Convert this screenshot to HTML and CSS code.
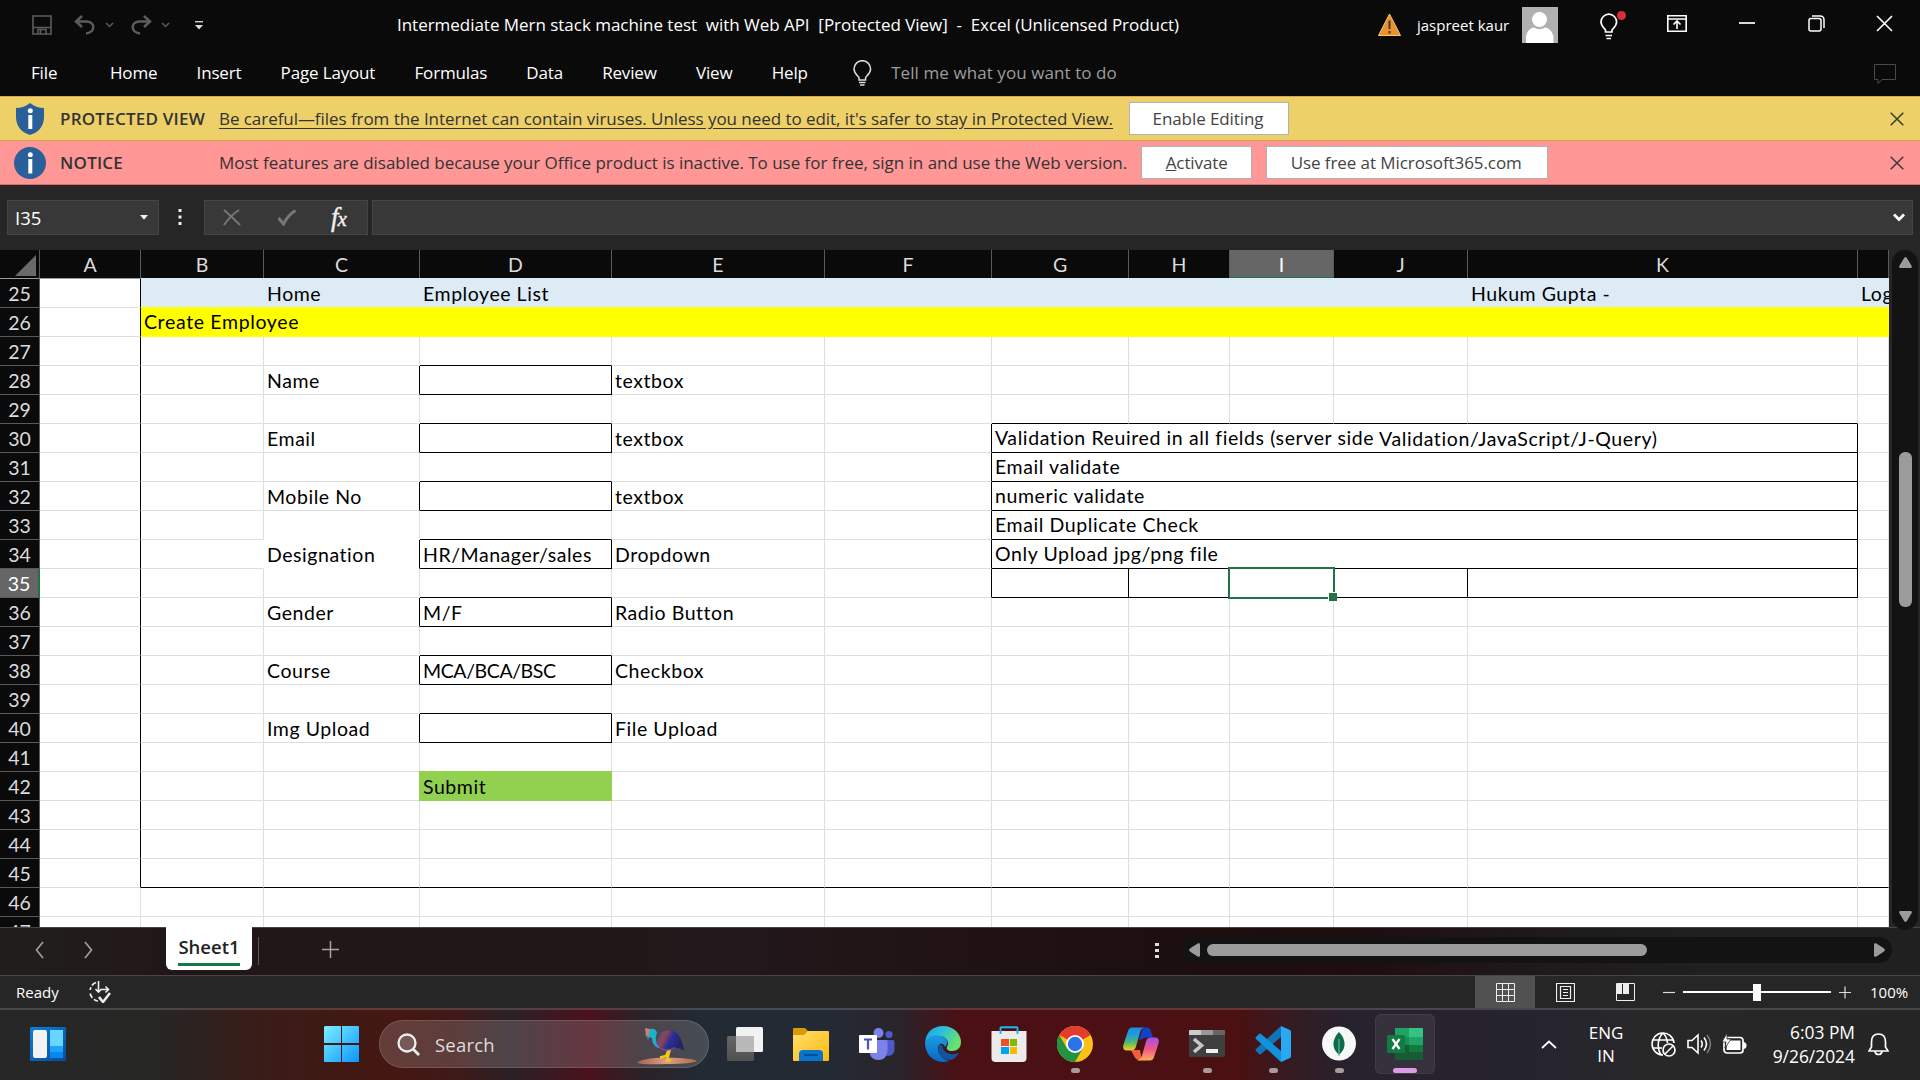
FILE: index.html
```html
<!DOCTYPE html>
<html lang="en">
<head>
<meta charset="utf-8">
<title>Intermediate Mern stack machine test with Web API - Excel</title>
<link rel="stylesheet" href="styles.css">
</head>
<body>
<div class="app">
  <header class="titlebar">
    <div class="quick">
      <svg class="q-save" width="20" height="20" viewBox="0 0 20 20"><path d="M1 1h18v18H1zM1 12.500h18M6 19v-4.500h8V19M8.500 15v4" fill="none" stroke="#5c5c5c" stroke-width="1.600"/></svg>
      <svg class="q-undo" width="22" height="20" viewBox="0 0 22 20"><path d="M8 1L2 6.500l6 5.500M2 6.500h11c9 1 8 11-1 12" fill="none" stroke="#5c5c5c" stroke-width="2.500"/></svg>
      <svg class="q-chev" width="9" height="6" viewBox="0 0 9 6"><path d="M1 1l3.500 3.500L8 1" fill="none" stroke="#5c5c5c" stroke-width="1.500"/></svg>
      <svg class="q-redo" width="22" height="20" viewBox="0 0 22 20"><path d="M14 1l6 5.500-6 5.500M20 6.500H9c-9 1-8 11 1 12" fill="none" stroke="#5c5c5c" stroke-width="2.500"/></svg>
      <svg class="q-chev" width="9" height="6" viewBox="0 0 9 6"><path d="M1 1l3.500 3.500L8 1" fill="none" stroke="#5c5c5c" stroke-width="1.500"/></svg>
      <svg class="q-more" width="8" height="9" viewBox="0 0 8 9"><path d="M0 .7h8" stroke="#ddd" stroke-width="1.300"/><path d="M0 4h8L4 8.500z" fill="#ddd"/></svg>
    </div>
    <div class="doc-title"><span class="t">Intermediate Mern stack machine test&nbsp; with Web API&nbsp; [Protected View]&nbsp; -&nbsp; Excel (Unlicensed Product)</span></div>
    <div class="account">
      <svg width="23" height="23" viewBox="0 0 23 23"><path d="M11.500 1L22.500 22.500H.5z" fill="#e8912d" stroke="#f6c983"/><path d="M11.500 7.500v8.500M11.500 18v2.500" stroke="#443a30" stroke-width="2"/></svg>
      <span class="user t">jaspreet kaur</span>
      <svg width="36" height="36" viewBox="0 0 36 36"><path fill="#b0b0b0" d="M0 0h36v36H0z"/><circle cx="17.500" cy="12.500" r="7.500" fill="#fff"/><path d="M4 36V29q2-8 8-8.500q5.500 3.500 11 0q6 .5 8.500 8.500v7z" fill="#fff"/></svg>
    </div>
    <div class="window-buttons">
      <svg width="28" height="30" viewBox="0 0 28 30"><path d="M6.500 21v-2C4.500 16.500 2 14.500 2 11a7.800 7.800 0 0 1 15.600 0c0 3.500-2.600 5.500-4.600 8v2zM6.500 24.500h6.500M7.500 27.500h4.500" fill="none" stroke="#fff" stroke-width="1.700"/><circle cx="22.500" cy="4.500" r="4.500" fill="#d92f34"/></svg>
      <svg width="20" height="17" viewBox="0 0 20 17"><path d="M.8.8h18.400v15.400H.8zM1 4h18M10 14V6.500M6.500 9.500L10 6l3.500 3.500" fill="none" stroke="#fff" stroke-width="1.600"/></svg>
      <svg width="16" height="17" viewBox="0 0 16 17"><path d="M0 8h16" stroke="#fff" stroke-width="1.700"/></svg>
      <svg width="17" height="17" viewBox="0 0 17 17"><rect x="1" y="3.500" width="12" height="12.500" rx="2" fill="none" stroke="#fff" stroke-width="1.500"/><path d="M4 1h8q4 0 4 4v8" fill="none" stroke="#fff" stroke-width="1.500"/></svg>
      <svg width="17" height="17" viewBox="0 0 17 17"><path d="M1 1l15 15M16 1L1 16" stroke="#fff" stroke-width="1.600"/></svg>
    </div>
  </header>

  <nav class="tabs">
    <span class="t file">File</span><span class="t">Home</span><span class="t">Insert</span><span class="t">Page Layout</span><span class="t">Formulas</span><span class="t">Data</span><span class="t">Review</span><span class="t">View</span><span class="t">Help</span>
    <svg class="bulb" width="19" height="26" viewBox="0 0 19 26"><path d="M6 20v-2.500C4 15 1 13 1 9a8.300 8.300 0 0 1 16.600 0c0 4-3 6-5 8.500V20zM6 22.500h6.500M7 25h4.500" fill="none" stroke="#ddd" stroke-width="1.500"/></svg>
    <span class="t tell">Tell me what you want to do</span>
    <svg class="comment" width="22" height="20" viewBox="0 0 22 20"><path d="M.5.5h21v15H8l-4 4v-4H.5z" fill="none" stroke="#4a4a4a"/></svg>
  </nav>

  <section class="bar protected">
    <svg class="bar-icon" width="32" height="32" viewBox="0 0 32 32"><path d="M16 0q6 5 14 5v10q-1 13-14 17Q3 28 2 15V5q8 0 14-5z" fill="#2a6099"/><circle cx="16.300" cy="7.800" r="2.500" fill="#fff"/><path d="M16.300 12v14" stroke="#fff" stroke-width="4"/></svg>
    <strong class="label t">PROTECTED VIEW</strong>
    <span class="msg link t">Be careful—files from the Internet can contain viruses. Unless you need to edit, it's safer to stay in Protected View.</span>
    <span class="btn b1"><span class="t">Enable Editing</span></span>
    <svg class="bar-close" width="14" height="14" viewBox="0 0 14 14"><path d="M.7.700l12.600 12.600M13.300.700L.7 13.300" stroke="#3a3a3a" stroke-width="1.500"/></svg>
  </section>
  <section class="bar notice">
    <svg class="bar-icon" width="32" height="32" viewBox="0 0 32 32"><circle cx="16" cy="16" r="16" fill="#2a6099"/><circle cx="16.300" cy="7.800" r="2.500" fill="#fff"/><path d="M16.300 12v14.500" stroke="#fff" stroke-width="4"/></svg>
    <strong class="label t">NOTICE</strong>
    <span class="msg t">Most features are disabled because your Office product is inactive. To use for free, sign in and use the Web version.</span>
    <span class="btn b2"><span class="t"><u>A</u>ctivate</span></span>
    <span class="btn b3"><span class="t">Use free at Microsoft365.com</span></span>
    <svg class="bar-close" width="14" height="14" viewBox="0 0 14 14"><path d="M.7.700l12.600 12.600M13.300.700L.7 13.300" stroke="#3a3a3a" stroke-width="1.500"/></svg>
  </section>

  <section class="formula">
    <div class="field name"><span class="t">I35</span><svg width="8" height="5" viewBox="0 0 8 5"><path d="M0 0h8L4 4.800z" fill="#eee"/></svg></div>
    <svg class="dots" width="4" height="16" viewBox="0 0 4 16"><path d="M.5 0h3v3h-3zM.5 6.500h3v3h-3zM.5 13h3v3h-3z" fill="#eee"/></svg>
    <div class="field fx">
      <svg width="18" height="17" viewBox="0 0 18 17"><path d="M1 1q7 6 16 15M16 1Q8 6 1 16" fill="none" stroke="#777" stroke-width="2"/></svg>
      <svg width="20" height="17" viewBox="0 0 20 17"><path d="M1.500 9l5 6Q11 6 18.500 1.500" fill="none" stroke="#777" stroke-width="3"/></svg>
      <span class="fx-label">f<small>x</small></span>
    </div>
    <div class="field input"><svg width="12" height="9" viewBox="0 0 12 9"><path d="M1 1.500l5 5 5-5" fill="none" stroke="#fff" stroke-width="2.800"/></svg></div>
  </section>

  <main class="work">
    <div class="sheet" id="sheet"></div>
    <div class="vscroll">
      <svg width="13" height="11" viewBox="0 0 13 11"><path d="M6.500 0q1 0 2 2l4.200 7q.5 2-1 2H1.300q-1.500 0-1-2l4.200-7q1-2 2-2z" fill="#9b9b9b"/></svg>
      <div class="vthumb"></div>
      <svg width="13" height="11" viewBox="0 0 13 11"><path d="M6.500 11q1 0 2-2l4.200-7q.5-2-1-2H1.300q-1.500 0-1 2l4.200 7q1 2 2 2z" fill="#9b9b9b"/></svg>
    </div>
  </main>

  <footer class="sheetbar">
    <svg class="prev" width="9" height="18" viewBox="0 0 9 18"><path d="M8 1L1.500 9 8 17" fill="none" stroke="#a09c9c" stroke-width="1.700"/></svg>
    <svg class="next" width="9" height="18" viewBox="0 0 9 18"><path d="M1 1l6.500 8L1 17" fill="none" stroke="#a09c9c" stroke-width="1.700"/></svg>
    <div class="tab"><span class="t">Sheet1</span></div>
    <i class="tab-sep"></i>
    <svg class="add" width="17" height="17" viewBox="0 0 17 17"><path d="M0 8.500h17M8.500 0v17" stroke="#a8a4a4" stroke-width="1.500"/></svg>
    <svg class="grip" width="4" height="16" viewBox="0 0 4 16"><path d="M0 0h4v3H0zM0 6h4v3H0zM0 12h4v3H0z" fill="#ddd"/></svg>
    <div class="hscroll">
      <svg width="11" height="14" viewBox="0 0 11 14"><path d="M0 7q0-1 2-2.200L9 .3q2-.6 2 1v11.400q0 1.600-2 1L2 9.200Q0 8 0 7z" fill="#9b9b9b"/></svg>
      <div class="hthumb"></div>
      <svg width="11" height="14" viewBox="0 0 11 14"><path d="M11 7q0-1-2-2.200L2 .3q-2-.6-2 1v11.400q0 1.600 2 1l7-4.500Q11 8 11 7z" fill="#9b9b9b"/></svg>
    </div>
  </footer>

  <footer class="status">
    <span class="t ready">Ready</span>
    <svg class="access" width="22" height="22" viewBox="0 0 22 22"><path d="M7 1.500A9 9 0 0 0 1.200 9M1.200 12.500A9 9 0 0 0 9 20" fill="none" stroke="#eee" stroke-width="1.700" stroke-dasharray="5 2"/><path d="M9.500 0v11M6.500 8l3 3 3-3M12 8.500h7M16.500 5.500l3 3-3 3" fill="none" stroke="#eee" stroke-width="1.600"/><path d="M10 16l4 5 7-9" fill="none" stroke="#eee" stroke-width="2.600"/></svg>
    <div class="views">
      <span class="view on"><svg width="19" height="19" viewBox="0 0 19 19"><path d="M.5.5h18v18H.5zM6.500 0v19M12.500 0v19M0 6.500h19M0 12.500h19" fill="none" stroke="#eee"/></svg></span>
      <span class="view"><svg width="19" height="19" viewBox="0 0 19 19"><path d="M.5.500h18v18H.5zM4.500 3.500h10v12h-10zM7 6.500h5M7 9.500h5M7 12.500h5" fill="none" stroke="#eee" stroke-width="1.200"/></svg></span>
      <span class="view"><svg width="19" height="19" viewBox="0 0 19 19"><path d="M.5.500h18v17H.5z" fill="none" stroke="#eee"/><path d="M1 1h5v10H1zM7 1h6v10H7z" fill="#eee"/></svg></span>
    </div>
    <div class="zoom">
      <svg width="12" height="13" viewBox="0 0 12 13"><path d="M0 6.500h12" stroke="#ddd" stroke-width="1.200"/></svg>
      <div class="track"><i></i></div>
      <svg width="12" height="13" viewBox="0 0 12 13"><path d="M0 6.500h12M6 .5v12" stroke="#ddd" stroke-width="1.200"/></svg>
      <span class="t">100%</span>
    </div>
  </footer>

  <div class="taskbar">
    <svg class="widgets" width="36" height="34" viewBox="0 0 36 34"><defs>
      <linearGradient id="wd" x2="1" y2="1"><stop stop-color="#0d7fdc"/><stop offset="1" stop-color="#0a4a94"/></linearGradient>
      <linearGradient id="win" x2="1" y2="1"><stop stop-color="#7df0ff"/><stop offset="1" stop-color="#0a95ff"/></linearGradient></defs>
      <rect width="36" height="34" rx="1.500" fill="url(#wd)"/><rect x="3" y="3" width="14" height="28" rx="2" fill="#f3f3f3"/><path d="M20 3h13v16H20z" fill="#68d7ff"/><path d="M20 19h13v6H20z" fill="#1ba4fb"/><path d="M20 25h13v6H20z" fill="#0788ee"/></svg>
    <svg class="start" width="36" height="36" viewBox="0 0 36 36"><path d="M1 0h16v17H0V1zM18 0h16q1 0 1 1v16H18zM0 19h17v17H1q-1 0-1-1zM18 19h17v16q0 1-1 1H18z" fill="url(#win)"/></svg>
    <div class="search">
      <svg width="23" height="23" viewBox="0 0 23 23"><circle cx="10" cy="10" r="8.500" fill="#8a7676" fill-opacity=".5" stroke="#eee" stroke-width="2.300"/><path d="M16 16l6 6" stroke="#eee" stroke-width="2.800"/></svg>
      <span class="t">Search</span>
      <svg class="bird" width="62" height="42" viewBox="0 0 62 42"><defs><linearGradient id="bd" x2="1" y2=".4"><stop stop-color="#1a5fae"/><stop offset=".35" stop-color="#8f4350"/><stop offset=".6" stop-color="#262e9a"/><stop offset="1" stop-color="#1f2560"/></linearGradient><linearGradient id="sd" x2="1"><stop stop-color="#a8604e"/><stop offset=".5" stop-color="#e0a080"/><stop offset="1" stop-color="#a86a48"/></linearGradient></defs>
        <path d="M0 40q4-5 30-5.500 26 .5 30 3.500-4 3-30 3-24 1-30-1z" fill="url(#sd)"/><path d="M32 26l-3 7-6 1.500M33 26l-3 11.500h4" fill="none" stroke="#f2c81e" stroke-width="2.400"/>
        <path d="M13 6q6-1 7 4-2 4-1 8 1 4 4 6l-2 1q-6-3-6-10l-3-1 -1 3q-2-4 2-11z" fill="#1fb0cc"/><path d="M8 5l5 1-1 6-3 2z" fill="#b98a72"/>
        <path d="M20 18q3-10 8-10 10-3 14 5 4 6 5 15-5-4-9-3-4 3-9 2-6-1-9-9z" fill="url(#bd)"/><path d="M19 18q3 9 10 9 5 0 9-2.500" fill="none" stroke="#8a42a4" stroke-width="1.300"/></svg>
    </div>
    <div class="pinned">
      <span class="app-icon"><svg width="36" height="36" viewBox="0 0 36 36"><defs><linearGradient id="tv" y2="1" x2="0"><stop stop-color="#666"/><stop offset="1" stop-color="#505050"/></linearGradient></defs><rect x="9" y="1" width="27" height="25" rx="1.500" fill="#f2f2f2"/><rect y="10" width="27" height="25" rx="1.500" fill="url(#tv)"/><path d="M9 10h18v16H9z" fill="#b9b9b9"/></svg></span>
      <span class="app-icon"><svg width="36" height="36" viewBox="0 0 36 36"><defs><linearGradient id="fo" x2="1" y2="1"><stop stop-color="#ffdf6b"/><stop offset="1" stop-color="#fdb911"/></linearGradient></defs><path d="M0 3q0-1 1-1h11l4 4-4 3H0z" fill="#d99a05"/><path d="M0 9h11l4-4h20q1 0 1 1v28q0 1-1 1H1q-1 0-1-1z" fill="url(#fo)"/><path d="M6 35V28q0-4 4-4h16q4 0 4 4v7z" fill="#0a74cc"/><path d="M11 29h14" stroke="#064f92" stroke-width="2"/></svg></span>
      <span class="app-icon"><svg width="36" height="36" viewBox="0 0 36 36"><circle cx="19.500" cy="7" r="5" fill="#7b83eb"/><circle cx="30" cy="8.500" r="3.600" fill="#5059c9"/><path d="M26 14h8q1.500 0 1.500 1.500V23q0 6-6 7-3 0-5-2z" fill="#5059c9"/><path d="M12 14h15q1.500 0 1.500 1.500V25q-1 9-9 9t-9-8z" fill="#7b83eb"/><rect y="9" width="18" height="18" rx="1" fill="#fff"/><path d="M5 13.500h8M9 13.500v10" stroke="#4b53bc" stroke-width="2.200"/></svg></span>
      <span class="app-icon"><svg width="36" height="36" viewBox="0 0 36 36"><defs><linearGradient id="e1" x2="1" y2=".4"><stop stop-color="#1aa0e8"/><stop offset=".5" stop-color="#2fc0d8"/><stop offset="1" stop-color="#66e36a"/></linearGradient><linearGradient id="e2" x2="0" y2="1"><stop stop-color="#1b9de2"/><stop offset="1" stop-color="#0a68c4"/></linearGradient></defs><path d="M0 17C1 5 9 0 18 0c11 0 18 8 18 16 0 6-4 9-9 9-4 0-6-2-5-4 3-5-1-11-8-11C7 10 2 13 0 17z" fill="url(#e1)"/><path d="M0 17c3-9 16-10 21-4 2 3 1 6-1 8-1-3-3-4-5-3-5 4-1 14 9 17C10 39 0 29 0 17z" fill="url(#e2)"/><path d="M14 19c-3 8 3 15 12 15 4-1 6-4 8-7-9 3-16 0-17-8z" fill="#1254a0"/></svg></span>
      <span class="app-icon"><svg width="36" height="36" viewBox="0 0 36 36"><path d="M.5 5h35v27q0 4-4 4h-27q-4 0-4-4z" fill="#ececec"/><path d="M9.500 8V2q0-.8.8-.8h15.400q.8 0 .8.800v6" fill="none" stroke="#22b3ee" stroke-width="1.900"/><path d="M10 13h8v7h-8z" fill="#f25022"/><path d="M19 13h7v7h-7z" fill="#7fba00"/><path d="M10 21h8v7h-8z" fill="#00a4ef"/><path d="M19 21h7v7h-7z" fill="#ffb900"/></svg></span>
      <span class="app-icon run"><svg width="36" height="36" viewBox="0 0 36 36"><circle cx="18" cy="18" r="18" fill="#fbc116"/><path d="M18 18L2.400 9a18 18 0 0 1 31.200 0z" fill="#e33b2e"/><path d="M2.400 9a18 18 0 0 0 15.600 27l7.800-13.500L10 22.500z" fill="#229342"/><circle cx="18" cy="18" r="9" fill="#fff"/><circle cx="18" cy="18" r="7.200" fill="#2b73e8"/></svg></span>
      <span class="app-icon"><svg width="36" height="36" viewBox="0 0 36 36"><defs><linearGradient id="c1" x2="0" y2="1"><stop stop-color="#1b8ce8"/><stop offset=".35" stop-color="#1fa0d8"/><stop offset=".65" stop-color="#55b86a"/><stop offset="1" stop-color="#f5d020"/></linearGradient><linearGradient id="c2" x2="0" y2="1"><stop stop-color="#a050f0"/><stop offset=".5" stop-color="#f0568a"/><stop offset="1" stop-color="#fdae58"/></linearGradient></defs><path d="M20 1.500h4q3 0 4 4l2 6h-8l-6 3z" fill="#1740c8"/><path d="M8 24h9l2 10q-6 1-8-4z" fill="#f2603a"/><path d="M9 1.500h12q-3 1-4 5l-4 14q-1 4-5 4H4q-5 0-3.500-6L5 5q1-3.500 4-3.500z" fill="url(#c1)"/><path d="M27 34.500H14q4-1 5-5l4-14q1-4 5-4h4q5 0 3.500 6L31 31q-1 3.500-4 3.500z" fill="url(#c2)"/></svg></span>
      <span class="app-icon run"><svg width="36" height="36" viewBox="0 0 36 36"><rect y="4" width="36" height="27" rx="1.500" fill="#3f3f3f"/><path d="M0 9V5q0-1 1-1h11v5z" fill="#ccc"/><path d="M12 4h12v5H12z" fill="#999"/><path d="M24 4h11q1 0 1 1v4H24z" fill="#666"/><path d="M5 13l7.500 6.500L5 26" fill="none" stroke="#c8c8c8" stroke-width="3.600"/><path d="M17 23h12v4H17z" fill="#f0f0f0"/></svg></span>
      <span class="app-icon run"><svg width="36" height="36" viewBox="0 0 36 36"><path d="M1 25l3 3q1 1 2 0L26 11V0L1 23q-1 1 0 2z" fill="#0f74b8"/><path d="M1 11l3-3q1-1 2 0l20 17v11L1 13q-1-1 0-2z" fill="#1390dc"/><path d="M26 0l9 4q1 .5 1 2v24q0 1.500-1 2l-9 4z" fill="#2aa8f2"/></svg></span>
      <span class="app-icon run"><svg width="36" height="36" viewBox="0 0 36 36"><circle cx="18" cy="17.500" r="17" fill="#f7f7f7"/><path d="M18 6q6 6 5.500 13Q23 25 18 28.500 13 25 12.500 19 12 12 18 6z" fill="#0c6b4c"/><path d="M18 13v17" stroke="#6fae94" stroke-width="1.200"/></svg></span>
      <span class="app-icon active"><svg width="36" height="36" viewBox="0 0 36 36"><path d="M8 2h14v9H8z" fill="#21a366"/><path d="M22 2h13q1 0 1 1v8H22z" fill="#33c481"/><path d="M8 11h14v8H8z" fill="#1a8f55"/><path d="M22 11h14v8H22z" fill="#21a366"/><path d="M8 19h28v14q0 1-1 1H9q-1 0-1-1z" fill="#185c37"/><path d="M22 19h14v7H22z" fill="#107c41"/><rect y="9" width="18" height="18" rx="1.500" fill="#107c41"/><path d="M5.500 13l7 10M12.500 13l-7 10" stroke="#fff" stroke-width="2.300"/></svg></span>
    </div>
    <div class="tray">
      <svg class="up" width="16" height="9" viewBox="0 0 16 9"><path d="M1 8l7-6.500L15 8" fill="none" stroke="#fff" stroke-width="1.800"/></svg>
      <div class="lang"><span class="t">ENG</span><span class="t">IN</span></div>
      <svg class="globe" width="25" height="25" viewBox="0 0 25 25"><path d="M12 23A11 11 0 1 1 23 11M12 1C6 7 6 17 10 23M12 1q4 4 4.500 10M2 8h20M2 16h9" fill="none" stroke="#fff" stroke-width="1.600"/><circle cx="18" cy="18" r="6" fill="none" stroke="#fff" stroke-width="1.700"/><path d="M14 22l8-8" stroke="#fff" stroke-width="1.600"/></svg>
      <svg class="spk" width="25" height="22" viewBox="0 0 25 22"><path d="M1 7.500h4L11 2v18l-6-5.500H1z" fill="none" stroke="#fff" stroke-width="1.600"/><path d="M14 7.500q2.500 3.500 0 7M17 4.500q5 6.500 0 13" fill="none" stroke="#fff" stroke-width="1.600"/><path d="M20 2q7 9 0 18" fill="none" stroke="#777" stroke-width="1.600"/></svg>
      <svg class="bat" width="25" height="22" viewBox="0 0 25 22"><rect x="2" y="4.500" width="19" height="15.500" rx="3" fill="none" stroke="#fff" stroke-width="1.700"/><path d="M5 7.500h13.500V17H4.500z" fill="#fff"/><path d="M21 9q3.500 0 3.500 3.500T21 16z" fill="#fff"/><path d="M5 0L0 9h4l-1 6 6-9H5z" fill="#fff" stroke="#26262a" stroke-width=".8"/></svg>
      <div class="clock"><span class="t">6:03 PM</span><span class="t">9/26/2024</span></div>
      <svg class="bell" width="21" height="23" viewBox="0 0 21 23"><path d="M10.500 1q-7 0-7 8v5L1 18h19l-2.500-4V9q0-8-7-8zM7 18.500q.5 3 3.500 3t3.500-3" fill="none" stroke="#fff" stroke-width="1.700"/></svg>
    </div>
  </div>
</div>
<script src="script.js"></script>
</body>
</html>
```
FILE: styles.css
```css
* { box-sizing: border-box; }
body { margin: 0; background: #0a0a0a; font-family: "Open Sans", "Noto Sans", sans-serif; color: #fff; overflow: hidden; }
svg { display: block; flex: none; }
.app { width: 1920px; height: 1080px; display: flex; flex-direction: column; overflow: hidden; }
.t { white-space: pre; }

.titlebar { height: 48px; display: flex; background: #0a0a0a; font-size: 16px; }
.quick { width: 397px; display: flex; align-items: center; padding: 2px 0 0 32px; }
.q-undo { margin-left: 22px; }
.q-redo { margin-left: 16px; }
.q-undo + .q-chev, .q-redo + .q-chev { margin-left: 9px; }
.q-more { margin-left: 25px; }
.doc-title { width: 981px; padding-top: 14px; line-height: 22px; font-size: 17px; letter-spacing: -.03px; }
.account { display: flex; width: 212px; padding-top: 7px; }
.account svg:first-child { margin-top: 6px; }
.user { margin-left: 16px; width: 105px; line-height: 36px; font-size: 15px; }
.window-buttons { display: flex; align-items: flex-start; padding-left: 9px; }
.window-buttons svg { margin-top: 15px; }
.window-buttons svg:first-child { margin-top: 11px; }
.window-buttons svg:nth-child(2) { margin-left: 40px; }
.window-buttons svg:nth-child(3) { margin-left: 52px; }
.window-buttons svg:nth-child(4) { margin-left: 53px; }
.window-buttons svg:nth-child(5) { margin-left: 51px; }

.tabs { height: 48px; display: flex; align-items: center; gap: 39.200px; padding: 0 24px 0 31px; font-size: 17px; letter-spacing: -.16px; }
.tabs .file { margin-right: 13.500px; }
.bulb { margin-left: 6px; margin-top: 2px; }
.tell { color: #9d9d9d; margin-left: -20px; letter-spacing: .08px; }
.comment { margin: 4px 0 0 auto; }

.bar { height: 44px; display: flex; align-items: center; border-bottom: 1px solid #c9a24b; color: #333; font-size: 17px; padding: 0 16px 0 14px; }
.protected { background: #eed068; border-top: 1px solid #dda54d; height: 45px; }
.notice { background: #ff9797; border-bottom-color: #d96a6a; }
.label { width: 159px; margin-left: 14px; font-weight: 600; letter-spacing: .22px; }
.msg { letter-spacing: -.025px; }
.link { text-decoration: underline; text-underline-offset: 3px; letter-spacing: -.055px; }
.btn { height: 33px; background: #fff; border: 1px solid #b1b1b1; display: flex; justify-content: center; align-items: center; color: #444; letter-spacing: -.08px; }
.b1 { width: 160px; margin-left: 16px; padding-right: 2px; }
.b2 { width: 111px; margin-left: 14px; }
.b3 { width: 282px; margin-left: 14px; padding-right: 2px; }
.bar-close { margin-left: auto; }

.formula { height: 65px; background: #262626; display: flex; align-items: flex-start; padding: 15px 7px 0 7px; }
.field { height: 35px; background: #383838; border: 1px solid #454545; display: flex; align-items: center; }
.name { width: 152px; justify-content: space-between; padding: 0 10px 0 7px; font-size: 18.500px; }
.dots { margin: 9px 22px 0 19px; }
.fx { width: 164px; padding-left: 18px; }
.fx svg + svg { margin-left: 36px; }
.fx-label { font: italic 27px/30px "Liberation Serif", serif; margin-left: 34px; color: #eee; -webkit-text-stroke: .4px #eee; }
.fx-label small { font-size: 21px; margin-left: -1px; }
.input { flex: 1; margin-left: 4px; justify-content: flex-end; padding-right: 7px; }

.work { height: 677px; display: flex; background: #262626; }
.sheet {
  width: 1889px; display: grid; overflow: hidden; background: #fff; color: #000;
  grid-template-columns: 40px 101px 123px 156px 192px 213px 167px 137px 101px 104px 134px 390px 31px;
  grid-template-rows: 29px; grid-auto-rows: 29px;
  font: 19.500px/28px Lato, "Open Sans", sans-serif;
}
.cell { border: 0 solid #dedede; border-width: 0 1px 1px 0; padding: 1px 0 0 3px; white-space: pre; min-width: 0; position: relative; line-height: 27px; letter-spacing: .55px; }
.cell.note { padding-top: 0; letter-spacing: .6px; }
.cell.caps { letter-spacing: -.4px; }
.cell.kr { border-right-color: #000; }
.cell.kb { border-bottom-color: #000; }
.cell.wr { border-right-color: #fff; }
.cell.wb { border-bottom-color: #fff; }
.cell.fill { border: 0; margin: -1px 0 0 0; padding-top: 2px; }
.blue { background: #ddebf7; }
.cell.yellow { background: #ff0; z-index: 1; padding-top: 1px; letter-spacing: .65px; }
.cell.green { background: #92d050; margin-left: -1px; padding-left: 4px; }
.head { background: #0a0a0a; color: #dcdcdc; text-align: center; border: 0 solid #5a5a5a; border-width: 0 1px 1px 0; padding-top: 1px; line-height: 27px; }
.top { border-bottom-color: #9a9a9a; }
.corner { display: flex; justify-content: flex-end; padding: 5px 3px 0 0; }
.head.on { background: #666; color: #fff; }
.top.on { border-bottom: 2px solid #217346; }
.side.on { border-right: 2px solid #217346; }
.low { position: relative; top: 1px; }
.selection { position: absolute; left: -2px; top: -2px; width: 107px; height: 32px; border: 2px solid #217346; z-index: 2; }
.selection::after { content: ""; position: absolute; right: -4px; bottom: -4px; width: 8px; height: 8px; background: #217346; border: solid #fff; border-width: 1px 0 0 1px; }
.vscroll { width: 26px; height: 680px; margin-left: 3px; border-radius: 13px; background: #131313; display: flex; flex-direction: column; align-items: center; padding: 7px 0; z-index: 1; }
.vthumb { width: 13px; height: 155px; border-radius: 6px; background: #9b9b9b; margin: 184px 0 304px; }

.sheetbar { height: 49px; border-top: 1px solid #454545; border-bottom: 1px solid #484545; display: flex; align-items: flex-start;
  background: linear-gradient(90deg, #211e1b 0, #211c1a 90px, #221718 160px, #221718 600px, #22171b 760px, #211314 950px, #1d0e10 1200px, #200d10 1350px, #1e1a1d 1550px, #202020 1700px, #202020); }
.prev { margin: 13px 0 0 35px; }
.next { margin: 13px 0 0 40px; }
.tab { width: 86px; height: 43px; margin: -1px 0 0 73px; background: #fff; border-radius: 0 0 6px 6px; color: #222; font-size: 18.500px; font-weight: 600; display: flex; justify-content: center; padding-top: 8px; line-height: 24px; }
.tab .t { border-bottom: 3px solid #107c41; height: 31px; }
.tab-sep { width: 1px; height: 28px; background: #5a5656; margin: 9px 0 0 6px; }
.add { margin: 13px 0 0 63px; }
.grip { margin: 15px 0 0 816px; }
.hscroll { margin: 9px 0 0 23px; width: 710px; height: 26px; border-radius: 13px; background: #131313; display: flex; align-items: center; padding: 0 7px 0 7px; }
.hthumb { width: 440px; height: 12px; border-radius: 6px; background: #9b9b9b; margin: 0 auto 0 7px; }

.status { height: 32px; background: #262626; display: flex; align-items: center; font-size: 15px; }
.ready { margin-left: 16px; width: 73px; }
.views { display: flex; margin-left: 1364px; }
.view { width: 60px; height: 32px; display: flex; align-items: center; justify-content: center; }
.view.on { background: #515151; }
.zoom { display: flex; align-items: center; margin-left: 8px; }
.track { width: 148px; height: 2px; background: #fff; margin: 0 8px; display: flex; align-items: center; padding-left: 70px; }
.track i { width: 8px; height: 17px; background: #fff; }
.zoom .t { margin-left: 19px; }

.taskbar { height: 72px; border-top: 2px solid rgba(255,255,255,.16); display: flex; align-items: center; padding-bottom: 2px;
  background: linear-gradient(90deg, #262726 0, #262625 160px, #3a1c17 260px, #451712 400px, #3e1a18 460px, #2c2026 510px, #4a121c 590px, #2c2128 640px, #222a34 700px, #242a34 840px, #2a232b 900px, #4a1014 960px, #4a1012 1240px, #351b22 1290px, #26222e 1350px, #26242e 1550px, #282828 1650px, #252525); }
.widgets { margin: 0 0 0 30px; }
.start { margin-left: 258px; }
.search { width: 330px; height: 48px; margin-left: 19px; border-radius: 24px; border: 1px solid rgba(255,255,255,.14); background: rgba(255,255,255,.16); display: flex; align-items: center; font-size: 18.500px; color: #ddd; }
.search > svg:first-child { margin-left: 17px; }
.search .t { margin-left: 15px; width: 63px; letter-spacing: .2px; }
.search .bird { margin-left: 139px; }
.pinned { display: flex; margin-left: 3px; }
.app-icon { width: 66px; height: 60px; display: flex; align-items: center; justify-content: center; position: relative; }
.run::after { content: ""; position: absolute; bottom: 1px; width: 9px; height: 5px; border-radius: 3px; background: #a99a9c; }
.active::before { content: ""; position: absolute; inset: 0 3px; border-radius: 6px; background: rgba(255,255,255,.07); border: 1px solid rgba(255,255,255,.06); }
.active::after { content: ""; position: absolute; bottom: 1px; width: 24px; height: 5px; border-radius: 3px; background: #dc9de6; }
.active svg { position: relative; }
.tray { display: flex; align-items: center; margin-left: 103px; }
.lang { display: flex; flex-direction: column; align-items: center; line-height: 23px; width: 50px; margin-left: 24px; font-size: 17px; }
.globe { margin-left: 20px; }
.spk { margin-left: 11px; }
.bat { margin-left: 10px; }
.clock { width: 108px; display: flex; flex-direction: column; align-items: flex-end; line-height: 24px; font-size: 17.400px; }
.bell { margin-left: 13px; }
```
FILE: script.js
```js
const columns = "ABCDEFGHIJKL".split("");
const first = 25, last = 47;
const text = {
  C25: "Home", D25: "Employee List", K25: "Hukum Gupta -", L25: "Logout", B26: "Create Employee",
  C28: "Name", E28: "textbox", C30: "Email", E30: "textbox", C32: "Mobile No", E32: "textbox",
  C34: "Designation", D34: "HR/Manager/sales", E34: "Dropdown", C36: "Gender", D36: "M/F", E36: "Radio Button",
  C38: "Course", D38: "MCA/BCA/BSC", E38: "Checkbox", C40: "Img Upload", E40: "File Upload", D42: "Submit",
  G31: "Email validate", G32: "numeric validate", G33: "Email Duplicate Check", G34: "Only Upload jpg/png file",
  G30: "Validation Reuired in all fields (server side <span class=\"low\">Validation/JavaScript/J-Query)</span>"
};

// Outlined ranges: [first column, first row, last column, last row]
const boxes = [28, 30, 32, 34, 36, 38, 40].map(r => ["D", r, "D", r])
  .concat([30, 31, 32, 33, 34].map(r => ["G", r, "K", r]))
  .concat(["G", "H", "I", "J", "K"].map(c => [c, 35, c, 35]))
  .concat([["B", 25, "L", 45]]);
const marks = {};
const mark = (c, r, cls) => { const k = columns[c] + r; (marks[k] = marks[k] || new Set()).add(cls); };

boxes.forEach(([a, top, b, bottom]) => {
  const l = columns.indexOf(a), e = columns.indexOf(b);
  for (let r = top; r <= bottom; r++) { mark(l - 1, r, "kr"); if (b !== "L") mark(e, r, "kr"); }
  for (let c = l; c <= e; c++) { mark(c, top - 1, "kb"); mark(c, bottom, "kb"); }
});

// The white fill of C34 hides the gridlines around it
mark(1, 34, "wr"); mark(2, 33, "wb"); mark(2, 34, "wb");

const sheet = document.getElementById("sheet");
function put(col, row, span, cls, html) {
  const el = document.createElement("div");
  el.className = cls;
  el.style.gridArea = `${row} / ${col} / auto / span ${span}`;
  el.innerHTML = html;
  sheet.append(el);
}
put(1, 1, 1, "head top corner", '<svg width="21" height="21" viewBox="0 0 21 21"><path d="M21 0v21H0z" fill="#6a6a6a"/></svg>');
columns.forEach((c, i) => put(i + 2, 1, 1, "head top" + (c === "I" ? " on" : ""), c === "L" ? "" : c));
for (let r = first; r <= last; r++) {
  const row = r - first + 2;
  put(1, row, 1, "head side" + (r === 35 ? " on" : ""), r);
  for (let i = 0; i < columns.length; i++) {
    const key = columns[i] + r;
    let span = 1, cls = "cell";
    if (columns[i] === "G" && r >= 30 && r <= 34) { span = 5; cls += " note kr kb"; }
    else cls += " " + [...(marks[key] || [])].join(" ");
    if (r === 25 && i > 0) cls += " fill blue";
    if (r === 26 && i > 0) { cls += " fill yellow"; span = 11; }
    if (key === "D42") cls += " fill green";
    if (key === "D38") cls += " caps";
    const content = key === "I35" ? '<div class="selection"></div>' : text[key] ? `<span class="t">${text[key]}</span>` : "";
    put(i + 2, row, span, cls, content);
    i += span - 1;
  }
}
```
